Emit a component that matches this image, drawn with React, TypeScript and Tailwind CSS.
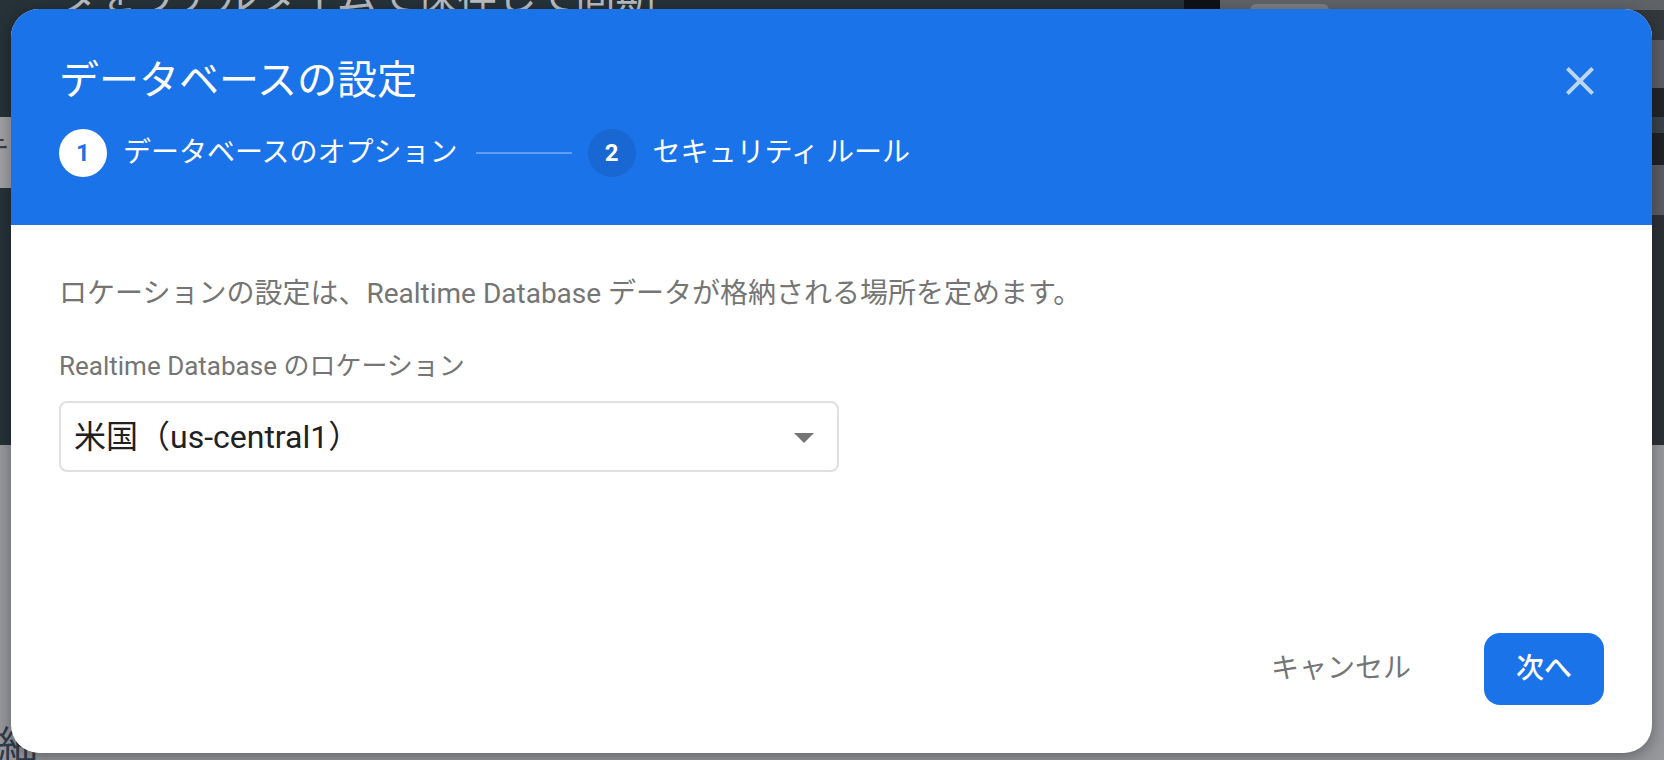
import React from "react";

const FONT = "font-['Roboto','Noto_Sans_CJK_JP',sans-serif]";

function Band({ h, left, right, children }: { h: string; left: string; right: string; children?: React.ReactNode }) {
  return (
    <div className={`flex w-full shrink-0 ${h}`}>
      <div className={`flex-1 overflow-hidden ${left}`}>{children}</div>
      <div className={`w-[444px] ${right}`} />
    </div>
  );
}

export default function App() {
  return (
    <div className={`relative w-[1664px] h-[760px] overflow-hidden bg-[#96989c] ${FONT}`}>
      {/* dimmed page behind the dialog */}
      <div className="flex flex-col w-full h-full">
        <div className="flex w-full h-[10px] shrink-0">
          <div className="flex-1 bg-[#263238] overflow-hidden">
            <div className="mt-[-23px] ml-[-22px] whitespace-nowrap text-[40px] leading-[40px] text-[#b9bdc1]">
              データをリアルタイムで保存して同期
            </div>
          </div>
          <div className="w-[36px] bg-[#0e1216]" />
          <div className="w-[444px] bg-[#5f6368] flex items-end">
            <div className="ml-[30px] w-[79px] h-[6px] rounded-t-[6px] bg-[#7c7f84]" />
          </div>
        </div>
        <Band h="h-[30px]" left="bg-[#263238]" right="bg-[#33383d]" />
        <Band h="h-[48px]" left="bg-[#263238]" right="bg-[#5b5f64]" />
        <Band h="h-[29px]" left="bg-[#263238]" right="bg-[#212529]" />
        <Band h="h-[16px]" left="bg-[#9fa1a5]" right="bg-[#394248]" />
        <Band h="h-[32px]" left="bg-[#9fa1a5]" right="bg-[#1e2226]">
          <div className="ml-[-19px] mt-[4px] text-[28px] leading-[28px] text-[#3a3d42]">テ</div>
        </Band>
        <Band h="h-[23px]" left="bg-[#9fa1a5]" right="bg-[#595d62]" />
        <Band h="h-[27px]" left="bg-[#263238]" right="bg-[#595d62]" />
        <Band h="h-[230px]" left="bg-[#263238]" right="bg-[#2c3035]" />
        <div className="flex-1 bg-[#96989c] overflow-hidden">
          <div className="mt-[282px] ml-[-2px] text-[40px] leading-[40px] text-[#2f3d4c]">細</div>
        </div>
      </div>

      {/* dialog */}
      <div className="absolute left-[11px] top-[9px] w-[1641px] h-[744px] rounded-[28px] overflow-hidden bg-white flex flex-col shadow-[0_4px_16px_rgba(0,0,0,0.35)]">
        <div className="bg-[#1a73e8] px-[48px] pt-[48px] pb-[48px] shrink-0">
          <div className="flex items-center justify-between h-[48px]">
            <h2 className="text-[40px] leading-[48px] font-normal text-white">データベースの設定</h2>
            <button className="w-[48px] h-[48px] flex items-center justify-center">
              <svg width="48" height="48" viewBox="0 0 24 24" fill="rgba(255,255,255,0.7)">
                <path d="M19 6.41L17.59 5 12 10.59 6.41 5 5 6.41 10.59 12 5 17.59 6.41 19 12 13.41 17.59 19 19 17.59 13.41 12z" />
              </svg>
            </button>
          </div>
          <div className="mt-[24px] flex items-center h-[48px]">
            <div className="w-[48px] h-[48px] rounded-full bg-white text-[#1a73e8] text-[24px] font-bold flex items-center justify-center">
              1
            </div>
            <span className="ml-[16px] text-[28px] leading-[40px] text-white">データベースのオプション</span>
            <div className="ml-[18px] w-[96px] h-[2px] bg-white/30" />
            <div className="ml-[16px] w-[48px] h-[48px] rounded-full bg-[#1967d2] text-white text-[24px] font-bold flex items-center justify-center">
              2
            </div>
            <span className="ml-[17px] text-[28px] leading-[40px] text-white">セキュリティ ルール</span>
          </div>
        </div>

        <div className="flex-1 px-[48px] pt-[49px]">
          <p className="text-[28px] leading-[40px] text-[#757575]">
            ロケーションの設定は、Realtime Database データが格納される場所を定めます。
          </p>
          <div className="mt-[36px] text-[26px] leading-[32px] text-[#757575]">Realtime Database のロケーション</div>
          <div className="mt-[19px] w-[780px] h-[71px] border-2 border-[#e0e0e0] rounded-[8px] flex items-center justify-between pl-[13px] pr-[9px]">
            <span className="text-[32px] leading-[40px] text-[#212121]">米国（us-central1）</span>
            <svg width="48" height="48" viewBox="0 0 24 24" fill="#757575">
              <path d="M7 10l5 5 5-5z" />
            </svg>
          </div>
        </div>

        <div className="flex justify-end items-center px-[48px] pb-[48px] shrink-0">
          <button className="h-[72px] px-[32px] text-[28px] text-[#757575]">キャンセル</button>
          <button className="ml-[41px] h-[72px] px-[32px] rounded-[16px] bg-[#1a73e8] text-white text-[28px] font-medium">
            次へ
          </button>
        </div>
      </div>
    </div>
  );
}
